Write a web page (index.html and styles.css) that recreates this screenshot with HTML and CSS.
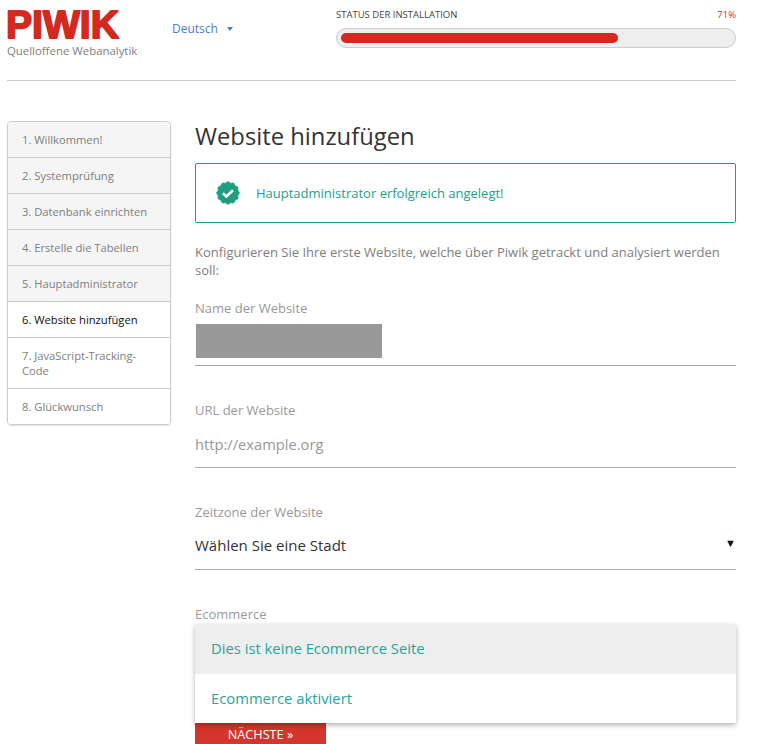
FILE: index.html
```html
<!DOCTYPE html>
<html lang="de">
<head>
    <meta charset="UTF-8">
    <meta name="viewport" content="width=device-width, initial-scale=1.0">
    <title>Piwik Installation</title>
    <link rel="stylesheet" href="styles.css">
</head>
<body>
    <div class="page">
        <header class="header">
            <div class="brand">
                <svg class="logo" width="122" height="47" viewBox="0 0 122 47" role="img" aria-label="Piwik">
                    <text x="1" y="38" textLength="113" lengthAdjust="spacingAndGlyphs">PIWIK</text>
                </svg>
                <div class="tagline">Quelloffene Webanalytik</div>
            </div>
            <div class="language">Deutsch <span class="caret"></span></div>
            <div class="status">
                <div class="status-labels">
                    <span>STATUS DER INSTALLATION</span>
                    <span class="status-percent">71%</span>
                </div>
                <div class="progress"><div class="progress-bar" style="width: 71%"></div></div>
            </div>
        </header>

        <div class="columns">
            <ul class="steps">
                <li class="step">1. Willkommen!</li>
                <li class="step">2. Systemprüfung</li>
                <li class="step">3. Datenbank einrichten</li>
                <li class="step">4. Erstelle die Tabellen</li>
                <li class="step">5. Hauptadministrator</li>
                <li class="step active">6. Website hinzufügen</li>
                <li class="step todo">7. JavaScript-Tracking-Code</li>
                <li class="step todo">8. Glückwunsch</li>
            </ul>

            <main class="content">
                <h1>Website hinzufügen</h1>

                <div class="alert">
                    <svg class="alert-icon" width="24" height="24" viewBox="0 0 24 24">
                        <polygon fill="#1f9d80" stroke="#1f9d80" stroke-width="0.6" stroke-linejoin="round" points="23.6,12 21.85,14.64 22.1,17.8 19.21,19.21 17.8,22.1 14.64,21.85 12,23.6 9.36,21.85 6.2,22.1 4.79,19.21 1.9,17.8 2.15,14.64 0.4,12 2.15,9.36 1.9,6.2 4.79,4.79 6.2,1.9 9.36,2.15 12,0.4 14.64,2.15 17.8,1.9 19.21,4.79 22.1,6.2 21.85,9.36"/>
                        <path fill="none" stroke="#fff" stroke-width="2.6" d="M6.8 12.3l3.6 3.2L17 9.3"/>
                    </svg>
                    <span>Hauptadministrator erfolgreich angelegt!</span>
                </div>

                <p class="intro">Konfigurieren Sie Ihre erste Website, welche über Piwik getrackt und analysiert werden soll:</p>

                <div class="field">
                    <label>Name der Website</label>
                    <div class="input"><div class="redacted"></div></div>
                </div>

                <div class="field">
                    <label>URL der Website</label>
                    <div class="input placeholder">http://example.org</div>
                </div>

                <div class="field">
                    <label>Zeitzone der Website</label>
                    <div class="input select">Wählen Sie eine Stadt <span class="select-arrow">▼</span></div>
                </div>

                <div class="field field-ecommerce">
                    <label>Ecommerce</label>
                    <ul class="dropdown">
                        <li class="dropdown-item selected">Dies ist keine Ecommerce Seite</li>
                        <li class="dropdown-item">Ecommerce aktiviert</li>
                    </ul>
                </div>

                <button class="next">NÄCHSTE »</button>
            </main>
        </div>
    </div>
</body>
</html>
```

FILE: styles.css
```css
html, body {
    margin: 0;
    height: 744px;
    overflow: hidden;
}

body {
    font-family: "Open Sans", "Noto Sans", sans-serif;
    background: #fff;
    color: #333;
}

.page {
    padding: 0 24px 0 7px;
}

.header {
    display: flex;
    height: 80px;
    border-bottom: 1px solid #ccc;
}

.brand {
    width: 165px;
}

.logo {
    display: block;
    margin-left: -2px;
}

.logo text {
    font-family: "Liberation Sans", sans-serif;
    font-weight: bold;
    font-size: 39px;
    fill: #d4291f;
    stroke: #d4291f;
    stroke-width: 1.8px;
    stroke-linejoin: round;
}

.tagline {
    font-size: 11.4px;
    line-height: 16px;
    color: #7e7e7e;
    margin-top: -4px;
}

.language {
    width: 164px;
    padding-top: 20px;
    font-size: 12px;
    line-height: 17px;
    color: #4a80c4;
}

.caret {
    display: inline-block;
    margin-left: 6px;
    vertical-align: 2px;
    border-top: 4px solid #4a80c4;
    border-left: 3px solid transparent;
    border-right: 3px solid transparent;
}

.status {
    flex: 1;
    padding-top: 8px;
}

.status-labels {
    display: flex;
    justify-content: space-between;
    font-size: 9.5px;
    line-height: 13px;
    color: #444;
}

.status-percent {
    color: #d4291f;
}

.progress {
    margin-top: 7px;
    height: 20px;
    box-sizing: border-box;
    border: 1px solid #ccc;
    border-radius: 10px;
    background: #eee;
    padding: 4px;
}

.progress-bar {
    height: 10px;
    border-radius: 5px;
    background: #d4291f;
}

.columns {
    display: flex;
    gap: 24px;
    padding-top: 40px;
}

.steps {
    list-style: none;
    margin: 0;
    padding: 0;
    width: 164px;
    height: 304px;
    box-sizing: border-box;
    flex-shrink: 0;
    border: 1px solid #ccc;
    border-radius: 4px;
    box-shadow: 0 1px 2px rgba(0, 0, 0, 0.12);
    overflow: hidden;
}

.step {
    padding: 10px 14px;
    font-size: 11.2px;
    line-height: 15px;
    color: #7e7e7e;
    background: #f5f5f5;
    border-bottom: 1px solid #ccc;
}

.step.active {
    background: #fff;
    color: #111;
}

.step.todo {
    background: #fff;
}

.step:last-child {
    border-bottom: none;
}

.content {
    flex: 1;
}

h1 {
    margin: 0;
    font-size: 23.8px;
    font-weight: normal;
    line-height: 30px;
    padding-bottom: 2px;
    color: #333;
}

.alert {
    display: flex;
    align-items: center;
    gap: 16px;
    height: 60px;
    box-sizing: border-box;
    margin-top: 10px;
    padding-left: 20px;
    border: 1px solid #1f9d80;
    border-radius: 2px;
    font-size: 13px;
    color: #1e9e8b;
}

.intro {
    margin: 20px 0;
    font-size: 13px;
    line-height: 18px;
    color: #7e7e7e;
}

.field + .field {
    margin-top: 35px;
}

.field label {
    display: block;
    font-size: 13px;
    line-height: 18px;
    color: #999;
}

.input {
    height: 49px;
    box-sizing: border-box;
    border-bottom: 1px solid #aaa;
    font-size: 15px;
    line-height: 49px;
    color: #333;
}

.redacted {
    width: 186px;
    height: 34px;
    margin-left: 1px;
    background: #999;
    position: relative;
    top: 7px;
}

.placeholder {
    font-size: 14.7px;
    line-height: 50px;
    color: #999;
}

.select {
    position: relative;
}

.select-arrow {
    position: absolute;
    right: 0;
    top: -3px;
    font-size: 11px;
    color: #111;
}

.field-ecommerce {
    position: relative;
    height: 118px;
}

.dropdown {
    position: absolute;
    top: 19px;
    left: 0;
    right: 0;
    margin: 0;
    padding: 0;
    list-style: none;
    background: #fff;
    box-shadow: 0 2px 5px rgba(0, 0, 0, 0.3);
}

.dropdown-item {
    height: 49.5px;
    padding-left: 16px;
    font-size: 14.8px;
    line-height: 49px;
    color: #26a69a;
}

.dropdown-item.selected {
    background: #eee;
}

.next {
    display: block;
    width: 131px;
    height: 36px;
    padding: 0 0 14px;
    border: none;
    background: #d4352c;
    color: #fff;
    font-family: inherit;
    font-size: 12.7px;
}
```
